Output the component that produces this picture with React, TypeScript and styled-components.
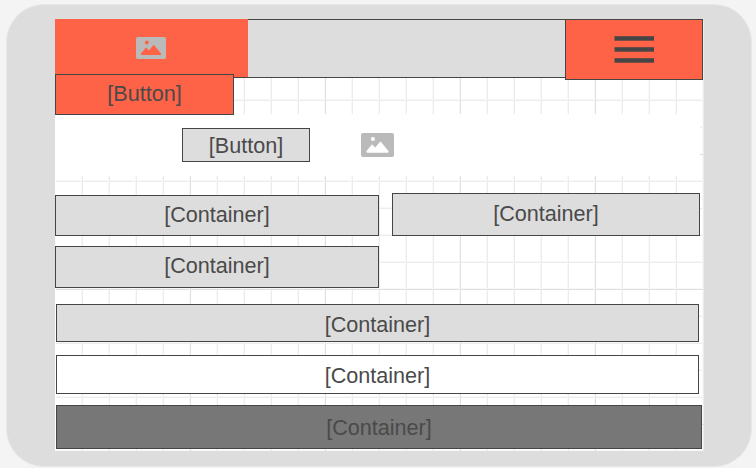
import React from "react";
import styled, { createGlobalStyle } from "styled-components";

const ink = "#454545";
const grey = "#dddddd";
const tomato = "#ff6347";

const GlobalStyle = createGlobalStyle`
  * { box-sizing: border-box; }
  body {
    margin: 0;
    background: #f4f4f4;
    font-family: "Liberation Sans", Arial, sans-serif;
    overflow: hidden;
  }
`;

const Page = styled.div`
  width: 756px;
  height: 468px;
  padding: 4px 4px 1px 6px;
`;

const Device = styled.main`
  width: 746px;
  height: 463px;
  padding: 14px 47px 14px 48px;
  border: 1px solid #e8e8e8;
  border-radius: 38px;
  background: ${grey};
`;

const Screen = styled.div`
  display: flex;
  flex-direction: column;
  width: 649px;
  height: 432px;
  background-color: #fff;
  background-image:
    linear-gradient(#fff, #fff),
    linear-gradient(90deg, #f8f8f8 1px, #e0e0e0 1px, #e0e0e0 2px, transparent 2px),
    linear-gradient(#f8f8f8 1px, #e0e0e0 1px, #e0e0e0 2px, transparent 2px),
    linear-gradient(90deg, #f8f8f8 1px, #ececec 1px, #ececec 2px, transparent 2px),
    linear-gradient(#f8f8f8 1px, #ececec 1px, #ececec 2px, transparent 2px);
  background-size: 1px 100%, 135px 100%, 100% 135px, 27px 100%, 100% 27px;
  background-position: 0 0, 134px 0, 0 134px, 26px 0, 0 26px;
  background-repeat: no-repeat, repeat, repeat, repeat, repeat;
`;

const Header = styled.header`
  display: flex;
  justify-content: space-between;
  flex: none;
  width: 648px;
  height: 59px;
  background: ${grey};
  box-shadow: inset 0 1px ${ink}, inset 0 -1px ${ink};
`;

const Logo = styled.div`
  display: flex;
  align-items: center;
  justify-content: center;
  width: 193px;
  height: 58px;
  padding-right: 1px;
  background: ${tomato};
`;

const MenuButton = styled.button`
  display: flex;
  align-items: center;
  justify-content: center;
  width: 138px;
  height: 61px;
  padding: 0;
  border: 1px solid ${ink};
  background: ${tomato};
`;

const Label = styled.span<{ $y?: number }>`
  margin-top: ${(p) => p.$y ?? 0}px;
  line-height: 24px;
`;

const Button = styled.button<{ $w: number; $h: number; $fill: string }>`
  display: flex;
  align-items: center;
  justify-content: center;
  flex: none;
  width: ${(p) => p.$w}px;
  height: ${(p) => p.$h}px;
  padding: 0;
  border: 1px solid ${ink};
  background: ${(p) => p.$fill};
  color: #4a4a4a;
  font: 21.6px "Liberation Sans", Arial, sans-serif;
`;

const TabButton = styled(Button)`
  margin-top: -4px;
  z-index: 1;
`;

const Hero = styled.section`
  display: flex;
  align-items: flex-start;
  gap: 51px;
  flex: none;
  width: 645px;
  height: 62px;
  margin-top: -1px;
  padding: 14px 0 0 127px;
  background: #fff;
`;

const HeroPicture = styled.div`
  display: flex;
  padding-top: 5px;
`;

const Columns = styled.section`
  display: flex;
  gap: 13px;
  margin-top: 17px;
`;

const Column = styled.div<{ $top?: number }>`
  display: flex;
  flex-direction: column;
  gap: 10px;
  padding-top: ${(p) => p.$top ?? 0}px;
`;

const Stack = styled.section`
  display: flex;
  flex-direction: column;
  margin: 16px 0 0 1px;
`;

const Container = styled.div<{ $w: number; $h: number; $fill?: string; $gap?: number }>`
  display: flex;
  align-items: center;
  justify-content: center;
  width: ${(p) => p.$w}px;
  height: ${(p) => p.$h}px;
  margin-top: ${(p) => p.$gap ?? 0}px;
  border: 1px solid ${ink};
  background: ${(p) => p.$fill ?? grey};
  color: #4a4a4a;
  font-size: 21.6px;
`;

function Picture({ width, height, scene }: { width: number; height: number; scene: string }) {
  return (
    <svg width={width} height={height} viewBox="0 0 30 22" preserveAspectRatio="none">
      <rect width="30" height="22" rx="1.8" fill="#bababa" />
      <g fill={scene}>
        <circle cx="10.8" cy="5.5" r="1.9" />
        <path d="M5 16.5 9.7 10.8Q10.2 10.4 10.7 10.9L13 13.4 17.2 8.2Q17.7 7.7 18.2 8.2L25 16.4V17.5Q25 18 24.4 18H5.6Q5 18 5 17.5Z" />
      </g>
    </svg>
  );
}

function Bars() {
  return (
    <svg width="40" height="28" viewBox="0 0 40 28" fill={ink}>
      <rect x="0.5" y="0.2" width="39.5" height="4.5" />
      <rect x="0.5" y="11.2" width="39.5" height="4.5" />
      <rect x="0.5" y="22.2" width="39.5" height="4.5" />
    </svg>
  );
}

export default function App() {
  return (
    <>
      <GlobalStyle />
      <Page>
        <Device>
          <Screen>
            <Header>
              <Logo>
                <Picture width={30} height={22} scene={tomato} />
              </Logo>
              <MenuButton aria-label="Menu">
                <Bars />
              </MenuButton>
            </Header>
            <TabButton $w={179} $h={41} $fill={tomato}>
              <Label $y={-2}>[Button]</Label>
            </TabButton>
            <Hero>
              <Button $w={128} $h={34} $fill={grey}>
                <Label $y={2}>[Button]</Label>
              </Button>
              <HeroPicture>
                <Picture width={33} height={24} scene="#fff" />
              </HeroPicture>
            </Hero>
            <Columns>
              <Column $top={2}>
                <Container $w={324} $h={41}>
                  <Label $y={-2}>[Container]</Label>
                </Container>
                <Container $w={324} $h={42}>
                  <Label $y={-2}>[Container]</Label>
                </Container>
              </Column>
              <Column>
                <Container $w={308} $h={43}>
                  <Label $y={-2}>[Container]</Label>
                </Container>
              </Column>
            </Columns>
            <Stack>
              <Container $w={643} $h={38}>
                <Label $y={4}>[Container]</Label>
              </Container>
              <Container $w={643} $h={39} $fill="#fff" $gap={13}>
                <Label $y={2}>[Container]</Label>
              </Container>
              <Container $w={646} $h={44} $fill="#777777" $gap={11}>
                <Label $y={1}>[Container]</Label>
              </Container>
            </Stack>
          </Screen>
        </Device>
      </Page>
    </>
  );
}
